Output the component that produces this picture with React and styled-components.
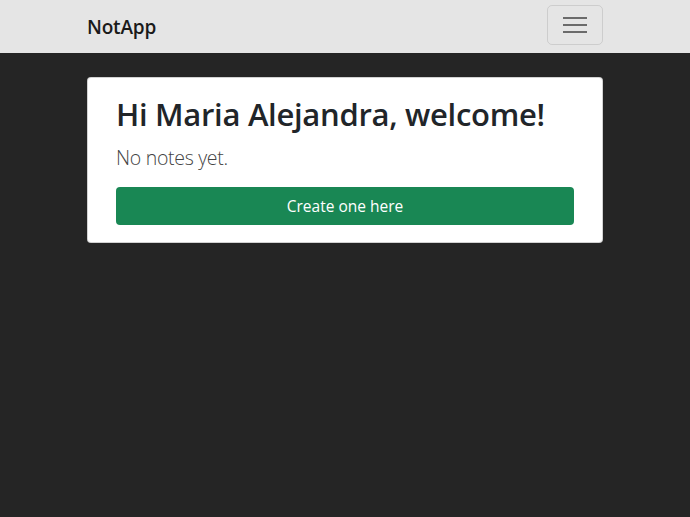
import React from "react";
import styled, { createGlobalStyle } from "styled-components";

const Global = createGlobalStyle`
  html, body {
    margin: 0;
    padding: 0;
    background: #252525;
    font-family: "Open Sans", "Noto Sans", sans-serif;
    color: #212529;
  }
  * { box-sizing: border-box; }
`;

const Nav = styled.nav`
  background: #e5e5e5;
  height: 53px;
  display: flex;
  align-items: center;
`;

const Container = styled.div`
  width: 516px;
  margin: 0 auto;
  display: flex;
  align-items: center;
  justify-content: space-between;
`;

const Brand = styled.a`
  font-size: 19px;
  font-weight: 600;
  color: #1a1a1a;
  text-decoration: none;
  letter-spacing: -0.2px;
  margin-top: 1px;
`;

const Toggler = styled.button`
  width: 56px;
  height: 40px;
  border: 1px solid rgba(0, 0, 0, 0.1);
  border-radius: 5px;
  background: transparent;
  display: flex;
  align-items: center;
  justify-content: center;
  padding: 0;
  margin-top: -3px;
`;

const Main = styled.main`
  width: 516px;
  margin: 24px auto 0;
`;

const Card = styled.div`
  background: #fff;
  border: 1px solid rgba(0, 0, 0, 0.175);
  border-radius: 4px;
  padding: 16px 28px 17px;
`;

const Title = styled.h1`
  margin: 0 0 10px;
  font-size: 31px;
  font-weight: 600;
  letter-spacing: -0.3px;
  line-height: 1.3;
  color: #212529;
`;

const Lead = styled.p`
  margin: 0 0 16px;
  font-size: 19.5px;
  font-weight: 300;
  color: #444;
  letter-spacing: -0.3px;
`;

const Button = styled.button`
  width: 100%;
  height: 38px;
  border: none;
  border-radius: 4px;
  background: #198754;
  color: #fff;
  font-family: inherit;
  font-size: 15.5px;
  cursor: pointer;
`;

export default function App() {
  return (
    <>
      <Global />
      <Nav>
        <Container>
          <Brand href="#">NotApp</Brand>
          <Toggler aria-label="menu">
            <svg width="26" height="20" viewBox="0 0 26 20">
              <g stroke="#6b6b6b" strokeWidth="2">
                <line x1="1" y1="3" x2="25" y2="3" />
                <line x1="1" y1="10" x2="25" y2="10" />
                <line x1="1" y1="17" x2="25" y2="17" />
              </g>
            </svg>
          </Toggler>
        </Container>
      </Nav>
      <Main>
        <Card>
          <Title>Hi Maria Alejandra, welcome!</Title>
          <Lead>No notes yet.</Lead>
          <Button>Create one here</Button>
        </Card>
      </Main>
    </>
  );
}
